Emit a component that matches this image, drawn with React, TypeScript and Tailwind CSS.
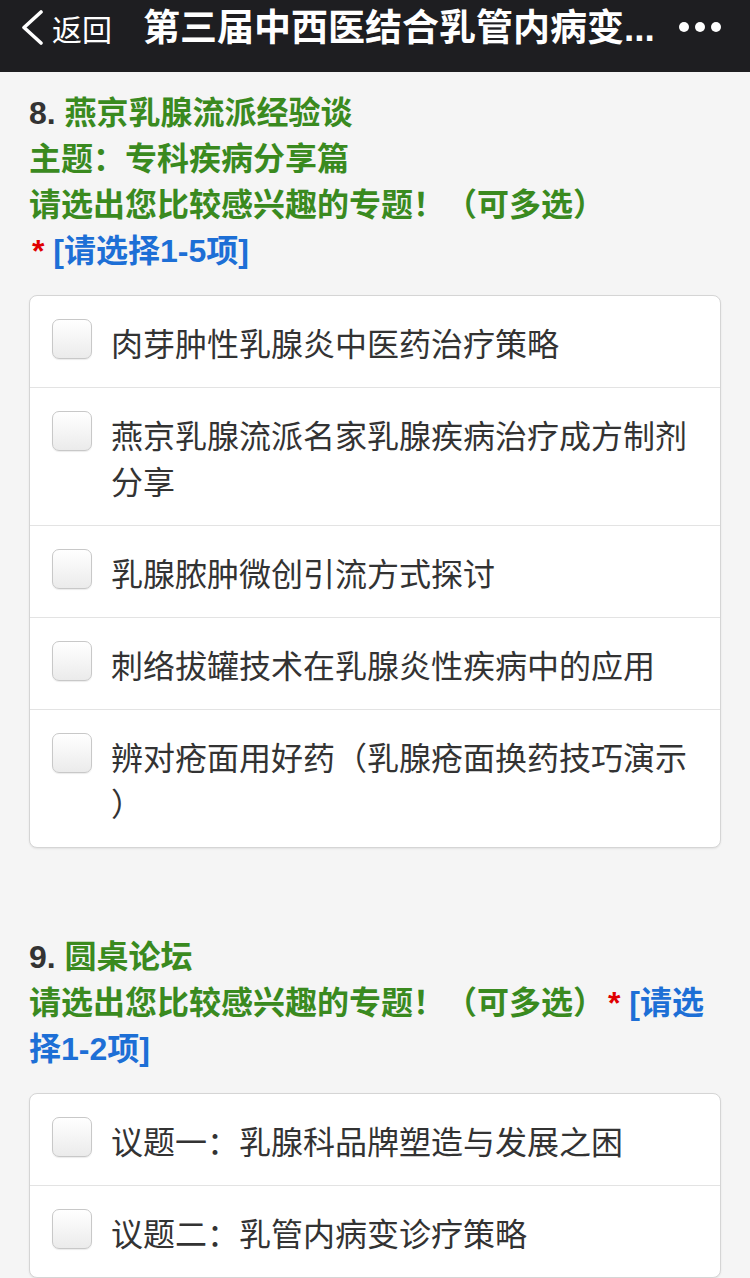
import React from "react";

const HEAD_FONT = { fontFamily: '"Liberation Sans", "Noto Sans CJK SC", sans-serif' };
const CJK_FONT = { fontFamily: '"Noto Sans CJK SC", "Liberation Sans", sans-serif' };

function Checkbox() {
  return (
    <div className="w-[40px] h-[40px] shrink-0 rounded-[7px] border border-[#c8c8c8] bg-linear-to-b from-[#ffffff] to-[#ebebeb] shadow-[0_1px_1px_rgba(0,0,0,0.08)]" />
  );
}

function OptionCard({ items }: { items: string[] }) {
  return (
    <div className="bg-white border border-[#d5d5d5] rounded-[8px] shadow-[0_1px_2px_rgba(0,0,0,0.08)]">
      {items.map((t, i) => (
        <div
          key={i}
          className={
            "flex items-start pl-[22px] pr-[20px] pt-[23px] pb-[22px] gap-[19px]" +
            (i > 0 ? " border-t border-[#e3e3e3]" : "")
          }
        >
          <Checkbox />
          <div
            className="text-[32px] leading-[46px] text-[#333333] min-w-0 flex-1 [line-break:anywhere]"
            style={CJK_FONT}
          >
            {t}
          </div>
        </div>
      ))}
    </div>
  );
}

export default function App() {
  return (
    <div className="w-[750px] min-h-[1278px] bg-[#f5f5f5] overflow-hidden">
      {/* header */}
      <div className="h-[72px] bg-[#1e1e21] flex items-center pb-[16px] relative" style={CJK_FONT}>
        <svg width="24" height="36" viewBox="0 0 24 36" className="ml-[20px] shrink-0">
          <polyline points="21,2 4,17.5 21,33" fill="none" stroke="#ffffff" strokeWidth="3.6" strokeLinecap="round" strokeLinejoin="round" />
        </svg>
        <span className="ml-[8px] text-[30px] text-white leading-none">返回</span>
        <span className="ml-[31px] text-[37px] font-bold text-white leading-none whitespace-nowrap" style={HEAD_FONT}>
          第三届中西医结合乳管内病变...
        </span>
        <div className="absolute left-[679px] top-[22px] flex gap-[6px]">
          <div className="w-[10px] h-[10px] rounded-full bg-white" />
          <div className="w-[10px] h-[10px] rounded-full bg-white" />
          <div className="w-[10px] h-[10px] rounded-full bg-white" />
        </div>
      </div>

      <div className="px-[29px] pt-[18px]">
        {/* Q8 */}
        <div className="text-[32px] leading-[46px] font-bold text-[#3a8a1f] mb-[21px]" style={HEAD_FONT}>
          <div>
            <span className="text-[#333333]">8.</span> 燕京乳腺流派经验谈
          </div>
          <div>主题：专科疾病分享篇</div>
          <div>请选出您比较感兴趣的专题！（可多选）</div>
          <div className="pl-[3px]">
            <span className="text-[#e00000]">*</span> <span className="text-[#1d6fd6]">[请选择1-5项]</span>
          </div>
        </div>
        <OptionCard
          items={[
            "肉芽肿性乳腺炎中医药治疗策略",
            "燕京乳腺流派名家乳腺疾病治疗成方制剂分享",
            "乳腺脓肿微创引流方式探讨",
            "刺络拔罐技术在乳腺炎性疾病中的应用",
            "辨对疮面用好药（乳腺疮面换药技巧演示）",
          ]}
        />

        {/* Q9 */}
        <div className="mt-[86px] text-[32px] leading-[46px] font-bold text-[#3a8a1f] mb-[21px]" style={HEAD_FONT}>
          <div>
            <span className="text-[#333333]">9.</span> 圆桌论坛
          </div>
          <div>
            请选出您比较感兴趣的专题！（可多选）<span className="ml-[3px] text-[#e00000]">*</span>{" "}
            <span className="text-[#1d6fd6]">[请选择1-2项]</span>
          </div>
        </div>
        <OptionCard items={["议题一：乳腺科品牌塑造与发展之困", "议题二：乳管内病变诊疗策略"]} />
      </div>
    </div>
  );
}
